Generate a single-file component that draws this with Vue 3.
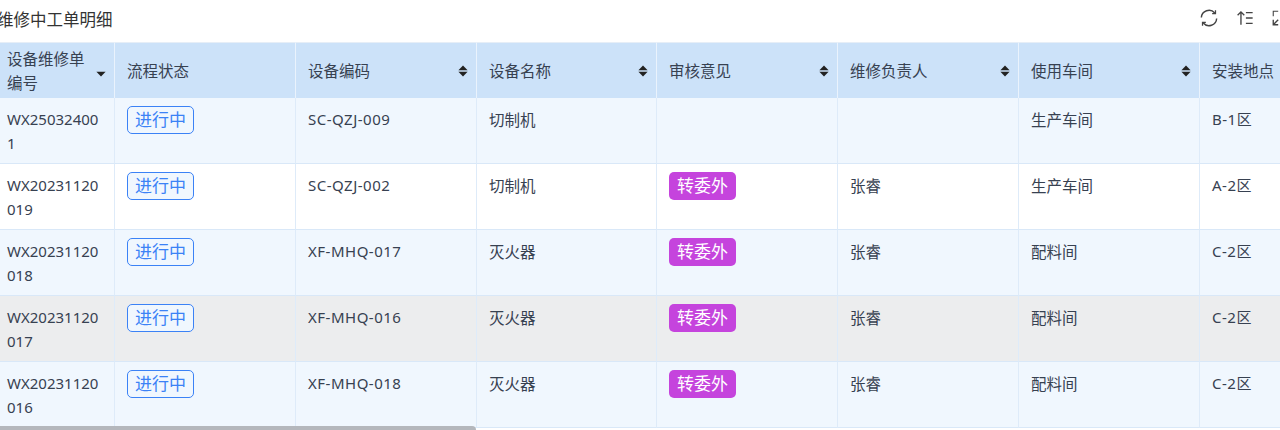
<script setup>
const columns = [
  { title: '设备维修单编号', key: 'no', sort: 'down' },
  { title: '流程状态', key: 'status' },
  { title: '设备编码', key: 'code', sort: 'both' },
  { title: '设备名称', key: 'name', sort: 'both' },
  { title: '审核意见', key: 'opinion', sort: 'both' },
  { title: '维修负责人', key: 'owner', sort: 'both' },
  { title: '使用车间', key: 'shop', sort: 'both' },
  { title: '安装地点', key: 'place', sort: 'both' },
]
const rows = [
  { no: 'WX250324001', status: '进行中', code: 'SC-QZJ-009', name: '切制机', opinion: '', owner: '', shop: '生产车间', place: 'B-1区' },
  { no: 'WX20231120019', status: '进行中', code: 'SC-QZJ-002', name: '切制机', opinion: '转委外', owner: '张睿', shop: '生产车间', place: 'A-2区' },
  { no: 'WX20231120018', status: '进行中', code: 'XF-MHQ-017', name: '灭火器', opinion: '转委外', owner: '张睿', shop: '配料间', place: 'C-2区' },
  { no: 'WX20231120017', status: '进行中', code: 'XF-MHQ-016', name: '灭火器', opinion: '转委外', owner: '张睿', shop: '配料间', place: 'C-2区', hover: true },
  { no: 'WX20231120016', status: '进行中', code: 'XF-MHQ-018', name: '灭火器', opinion: '转委外', owner: '张睿', shop: '配料间', place: 'C-2区' },
]
</script>

<template>
  <div class="page">
    <div class="bar">
      <span class="title">维修中工单明细</span>
      <div class="tools">
        <svg viewBox="0 0 20 20" class="ico ico-refresh" fill="none" stroke="#444" stroke-width="1.6">
          <path d="M1.5 9.5A8.5 8.5 0 0 1 16.4 4.4" />
          <path d="M18.5 10.5A8.5 8.5 0 0 1 3.6 15.6" />
          <path d="M17.2 1.4v3.7h-3.7" stroke-width="1.4" />
          <path d="M2.8 18.6v-3.7h3.7" stroke-width="1.4" />
        </svg>
        <svg viewBox="0 0 20 20" class="ico ico-sort" fill="none" stroke="#444" stroke-width="1.5">
          <path d="M5.5 17.5V3.4M1.8 7l3.7-3.8L9.2 7" />
          <path d="M11 4h7.5M11 10h7.5M11 16h7.5" />
        </svg>
        <svg viewBox="0 0 20 20" class="ico" fill="none" stroke="#444" stroke-width="1.5">
          <path d="M12 2.5h5.5V8M17.5 2.5 12 8" />
          <path d="M8 17.5H2.5V12M2.5 17.5 8 12" />
          <path d="M2.5 8V2.5H8M12 17.5h5.5V12" stroke-width="1.2" />
        </svg>
      </div>
    </div>
    <table class="grid">
      <colgroup>
        <col class="first" />
        <col v-for="n in 7" :key="n" class="rest" />
      </colgroup>
      <thead>
        <tr>
          <th v-for="c in columns" :key="c.key">
            <div class="head">
              <span class="head-text">{{ c.title }}</span>
              <svg v-if="c.sort" viewBox="0 0 10 12" class="sort">
                <path v-if="c.sort === 'both'" d="M5 .6 9.6 5.2H.4Z" fill="#222" />
                <path d="M5 11.4 9.6 6.8H.4Z" fill="#222" />
              </svg>
            </div>
          </th>
        </tr>
      </thead>
      <tbody>
        <tr v-for="r in rows" :key="r.no" :class="{ hover: r.hover }">
          <td class="latin">{{ r.no }}</td>
          <td class="badge"><span class="tag">{{ r.status }}</span></td>
          <td class="latin spaced">{{ r.code }}</td>
          <td>{{ r.name }}</td>
          <td class="badge"><span v-if="r.opinion" class="pill">{{ r.opinion }}</span></td>
          <td>{{ r.owner }}</td>
          <td>{{ r.shop }}</td>
          <td class="latin spaced">{{ r.place }}</td>
        </tr>
      </tbody>
    </table>
    <div class="scroll"></div>
  </div>
</template>

<style scoped>
.page {
  position: relative;
  width: 1280px;
  height: 430px;
  overflow: hidden;
  background: #fff;
  font-family: "Noto Sans", "Noto Sans CJK SC", sans-serif;
  color: #374151;
  font-size: 16px;
}
.bar {
  height: 42px;
  display: flex;
  align-items: center;
  justify-content: space-between;
  box-sizing: border-box;
  padding-bottom: 7px;
}
.title {
  margin-left: -3px;
  margin-top: 2px;
  font-size: 16.5px;
  color: #333;
}
.tools {
  display: flex;
  gap: 17px;
  margin-right: -9px;
}
.ico {
  width: 18px;
  height: 18px;
  display: block;
}
.ico-sort { margin-left: 1px; }
.grid {
  table-layout: fixed;
  border-collapse: separate;
  border-spacing: 0;
  width: 1386px;
  margin-left: -5px;
}
.first { width: 120px; }
.rest { width: 181px; }
col:nth-child(4) { width: 180px; }
th {
  height: 56px;
  box-sizing: border-box;
  background: #cce2f9;
  border-right: 1px solid #eaf3fd;
  border-top: 1px solid #e6eef7;
  padding: 0 8px 0 12px;
  font-weight: 400;
  text-align: left;
  line-height: 24px;
  font-size: 15.5px;
  color: #374151;
}
.head {
  display: flex;
  align-items: center;
  justify-content: space-between;
}
.head-text { flex: 1; min-width: 0; }
.sort {
  flex: none;
  width: 10px;
  height: 12px;
}
td {
  height: 66px;
  box-sizing: border-box;
  padding: 10px 12px 0;
  vertical-align: top;
  line-height: 24px;
  font-size: 15.5px;
  border-right: 1px solid #deebf9;
  border-bottom: 1px solid #d9e8f8;
  background: #fff;
  word-break: break-all;
  color: #374151;
}
td.latin { font-size: 15px; padding-top: 9px; }
td.spaced { letter-spacing: 0.5px; }
td.badge { padding-top: 9px; }
tbody tr:nth-child(odd) td { background: #f0f7fe; }
tbody tr.hover td { background: #ecedee; }
.tag {
  display: inline-block;
  box-sizing: border-box;
  width: 67px;
  height: 28px;
  line-height: 26px;
  text-align: center;
  font-size: 17px;
  color: #3b82f6;
  border: 1px solid #3b82f6;
  border-radius: 5px;
  background: #f0f7fe;
  vertical-align: top;
  margin-top: -1px;
}
.pill {
  display: inline-block;
  width: 67px;
  height: 28px;
  line-height: 28px;
  text-align: center;
  font-size: 17px;
  color: #fff;
  background: #c544dd;
  border-radius: 5px;
  vertical-align: top;
  margin-top: -1px;
}
.scroll {
  position: absolute;
  left: 0;
  bottom: 0;
  width: 476px;
  height: 4px;
  background: #b4b7bc;
  border-radius: 0 4px 0 0;
}
</style>
